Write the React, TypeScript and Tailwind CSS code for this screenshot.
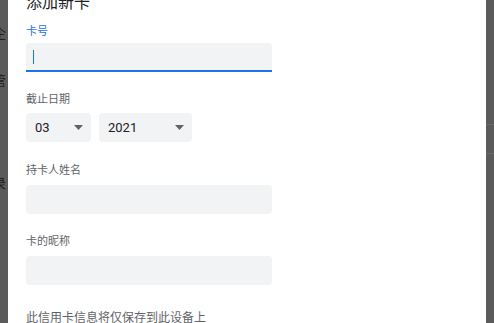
import React from 'react';

const fontStack = "font-['Roboto','Noto_Sans_CJK_SC',sans-serif]";

function Field({ label, active }: { label: string; active?: boolean }) {
  return (
    <div className="flex flex-col">
      <label
        className={`h-[14px] text-[11px] leading-[14px] ${active ? 'text-[#1a73e8]' : 'text-[#5f6368]'}`}
      >
        {label}
      </label>
    </div>
  );
}

function SelectBox({ value, width }: { value: string; width: string }) {
  return (
    <div className={`flex h-[29px] items-center justify-between rounded-[4px] bg-[#f1f3f4] pl-[9px] pr-[8px] ${width}`}>
      <span className="text-[13px] leading-[16px] text-[#202124]">{value}</span>
      <svg width="9" height="5" viewBox="0 0 9 5">
        <path d="M0 0 L9 0 L4.5 5 Z" fill="#5f6368" />
      </svg>
    </div>
  );
}

export default function App() {
  return (
    <div className={`flex h-[323px] w-[494px] overflow-hidden ${fontStack}`}>
      {/* page behind the dialog, darkened */}
      <div className="relative w-[8px] shrink-0 overflow-hidden bg-[#5b5b5b] text-[13px] leading-[14px] text-[#1e1e1e]">
        <span className="absolute left-[-7px] top-[27px]">企</span>
        <span className="absolute left-[-7px] top-[74px]">管</span>
        <span className="absolute left-[-7px] top-[177px]">录</span>
      </div>

      {/* dialog */}
      <div className="flex-1 bg-white pl-[18px]">
        <h2 className="mt-[-7px] h-[20px] text-[16px] leading-[20px] text-[#202124]">添加新卡</h2>

        <div className="mt-[12px] w-[246px]">
          <Field label="卡号" active />
          <div className="mt-[4px] flex h-[29px] items-center rounded-t-[4px] border-b-2 border-[#1a73e8] bg-[#f1f3f4] pl-[7px]">
            <span className="h-[14px] w-px bg-[#1a73e8]" />
          </div>
        </div>

        <div className="mt-[20px]">
          <div className="h-[16px] text-[11px] leading-[16px] text-[#5f6368]">截止日期</div>
          <div className="mt-[5px] flex gap-[8px]">
            <SelectBox value="03" width="w-[65px]" />
            <SelectBox value="2021" width="w-[93px]" />
          </div>
        </div>

        <div className="mt-[21px] w-[246px]">
          <div className="h-[16px] text-[11px] leading-[16px] text-[#5f6368]">持卡人姓名</div>
          <div className="mt-[6px] h-[29px] rounded-[4px] bg-[#f1f3f4]" />
        </div>

        <div className="mt-[20px] w-[246px]">
          <div className="h-[16px] text-[11px] leading-[16px] text-[#5f6368]">卡的昵称</div>
          <div className="mt-[6px] h-[29px] rounded-[4px] bg-[#f1f3f4]" />
        </div>

        <p className="mt-[24px] text-[12px] leading-[18px] text-[#5f6368]">此信用卡信息将仅保存到此设备上</p>
      </div>

      <div className="flex w-[8px] shrink-0 flex-col bg-[#5b5b5b]">
        <div className="mt-[124px] h-px bg-[#6a6a6a]" />
        <div className="mt-[28px] h-px bg-[#6a6a6a]" />
      </div>
    </div>
  );
}
